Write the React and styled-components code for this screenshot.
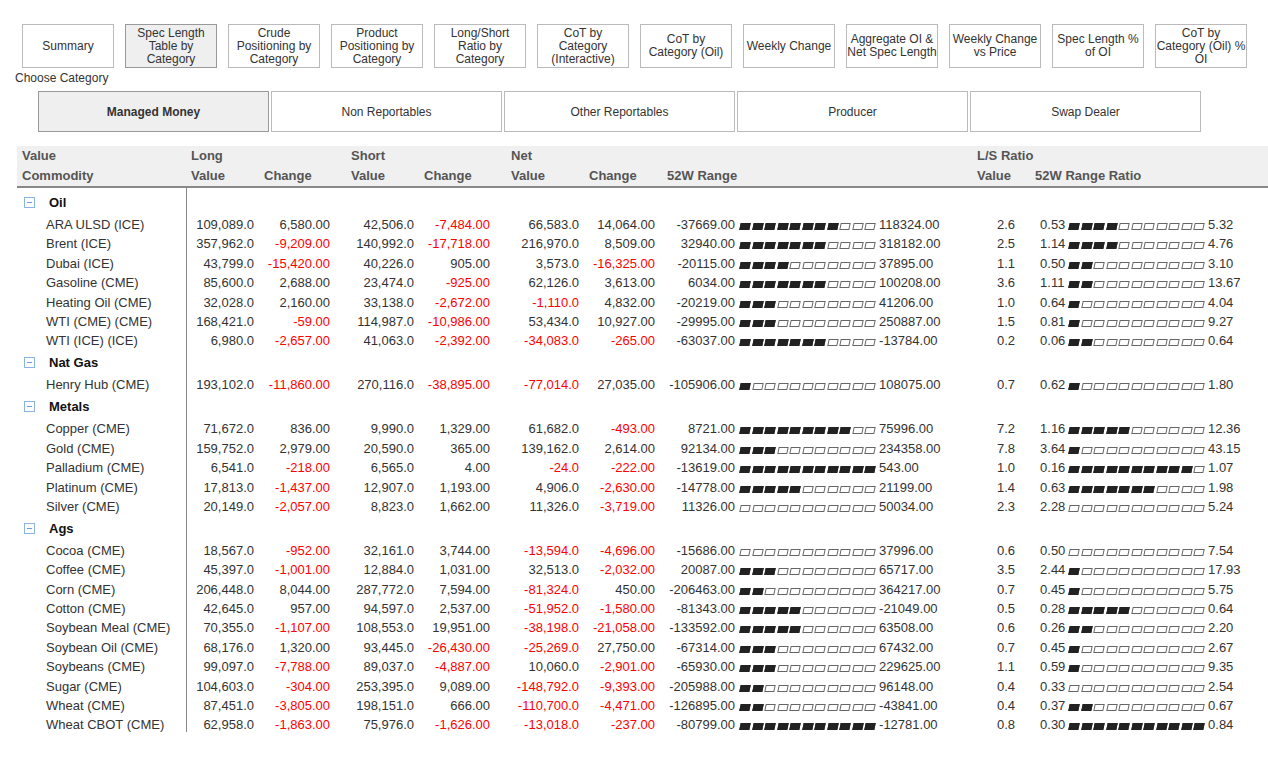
import React from "react";
import styled, { createGlobalStyle } from "styled-components";

const Global = createGlobalStyle`
  body { margin: 0; background: #fff; font-family: "Liberation Sans", Arial, sans-serif; color: #333; }
`;

const Page = styled.div`
  padding: 24px 0 0 0;
  width: 1268px;
`;

const Nav = styled.div`
  display: flex;
  gap: 11px;
  padding-left: 22px;
`;

const NavButton = styled.div`
  width: 90px;
  height: 42px;
  border: 1px solid ${(p) => (p.active ? "#999" : "#bbb")};
  background: ${(p) => (p.active ? "#efefef" : "#fff")};
  display: flex;
  align-items: center;
  justify-content: center;
  text-align: center;
  font-size: 12px;
  line-height: 13px;
  color: #333;
`;

const Label = styled.div`
  font-size: 12px;
  color: #333;
  margin: 3px 0 6px 15px;
`;

const Tabs = styled.div`
  display: flex;
  gap: 2px;
  padding-left: 38px;
`;

const Tab = styled.div`
  width: 229px;
  height: 39px;
  border: 1px solid ${(p) => (p.active ? "#999" : "#bbb")};
  background: ${(p) => (p.active ? "#efefef" : "#fff")};
  font-weight: ${(p) => (p.active ? "bold" : "normal")};
  display: flex;
  align-items: center;
  justify-content: center;
  font-size: 12px;
`;

const Table = styled.table`
  margin: 14px 0 0 17px;
  border-collapse: collapse;
  font-size: 13px;
  width: 1251px;
  table-layout: fixed;
`;

const Th = styled.th`
  background: #f0f0f0;
  text-align: left;
  font-weight: bold;
  color: #555;
  padding: 0 5px;
  height: ${(p) => (p.last ? "21px" : "19px")};
  border-bottom: ${(p) => (p.last ? "2px solid #888" : "none")};
  white-space: nowrap;
`;

const Td = styled.td`
  padding: 0 ${(p) => p.pr || 5}px 0 5px;
  height: ${(p) => (p.tall ? "22px" : "19.4px")};
  vertical-align: bottom;
  text-align: ${(p) => (p.left ? "left" : "right")};
  color: ${(p) => (p.neg ? "#f00" : "#333")};
  white-space: nowrap;
  border-right: ${(p) => (p.divider ? "1px solid #888" : "none")};
`;

const CatCell = styled.td`
  height: 22px;
  vertical-align: bottom;
  padding: 0 5px;
  font-weight: bold;
  color: #111;
  border-right: 1px solid #888;
  white-space: nowrap;
`;

const Toggle = styled.span`
  display: inline-block;
  width: 9px;
  height: 9px;
  border: 1px solid #8ab4e6;
  position: relative;
  margin: 0 14px 0 2px;
  vertical-align: -1px;
  &::after {
    content: "";
    position: absolute;
    left: 2px;
    right: 2px;
    top: 4px;
    height: 1px;
    background: #6a9ad8;
  }
`;

const Name = styled.span`
  padding-left: 24px;
`;

const Lo = styled.span`
  display: inline-block;
  width: ${(p) => p.w}px;
  text-align: right;
`;

const Bar = styled.span`
  display: inline-flex;
  gap: 2.5px;
  margin: 0 4px 0 5px;
  vertical-align: -1px;
`;

const Cell = styled.span`
  width: 10px;
  height: 7px;
  box-sizing: border-box;
  transform: skewX(-12deg);
  background: ${(p) => (p.on ? "#222" : "#fff")};
  border: 1px solid ${(p) => (p.on ? "#222" : "#666")};
`;

const Range = ({ lo, hi, n, w }) => (
  <>
    <Lo w={w}>{lo}</Lo>
    <Bar>
      {Array.from({ length: 11 }, (_, i) => (
        <Cell key={i} on={i < n} />
      ))}
    </Bar>
    {hi}
  </>
);

const data = [
  ["Oil", [
    ["ARA ULSD (ICE)", "109,089.0", "6,580.00", "42,506.0", "-7,484.00", "66,583.0", "14,064.00", "-37669.00", "118324.00", 8, "2.6", "0.53", "5.32", 4],
    ["Brent (ICE)", "357,962.0", "-9,209.00", "140,992.0", "-17,718.00", "216,970.0", "8,509.00", "32940.00", "318182.00", 7, "2.5", "1.14", "4.76", 4],
    ["Dubai (ICE)", "43,799.0", "-15,420.00", "40,226.0", "905.00", "3,573.0", "-16,325.00", "-20115.00", "37895.00", 4, "1.1", "0.50", "3.10", 2],
    ["Gasoline (CME)", "85,600.0", "2,688.00", "23,474.0", "-925.00", "62,126.0", "3,613.00", "6034.00", "100208.00", 7, "3.6", "1.11", "13.67", 2],
    ["Heating Oil (CME)", "32,028.0", "2,160.00", "33,138.0", "-2,672.00", "-1,110.0", "4,832.00", "-20219.00", "41206.00", 3, "1.0", "0.64", "4.04", 1],
    ["WTI (CME) (CME)", "168,421.0", "-59.00", "114,987.0", "-10,986.00", "53,434.0", "10,927.00", "-29995.00", "250887.00", 3, "1.5", "0.81", "9.27", 1],
    ["WTI (ICE) (ICE)", "6,980.0", "-2,657.00", "41,063.0", "-2,392.00", "-34,083.0", "-265.00", "-63037.00", "-13784.00", 7, "0.2", "0.06", "0.64", 2],
  ]],
  ["Nat Gas", [
    ["Henry Hub (CME)", "193,102.0", "-11,860.00", "270,116.0", "-38,895.00", "-77,014.0", "27,035.00", "-105906.00", "108075.00", 1, "0.7", "0.62", "1.80", 1],
  ]],
  ["Metals", [
    ["Copper (CME)", "71,672.0", "836.00", "9,990.0", "1,329.00", "61,682.0", "-493.00", "8721.00", "75996.00", 9, "7.2", "1.16", "12.36", 5],
    ["Gold (CME)", "159,752.0", "2,979.00", "20,590.0", "365.00", "139,162.0", "2,614.00", "92134.00", "234358.00", 3, "7.8", "3.64", "43.15", 1],
    ["Palladium (CME)", "6,541.0", "-218.00", "6,565.0", "4.00", "-24.0", "-222.00", "-13619.00", "543.00", 11, "1.0", "0.16", "1.07", 10],
    ["Platinum (CME)", "17,813.0", "-1,437.00", "12,907.0", "1,193.00", "4,906.0", "-2,630.00", "-14778.00", "21199.00", 5, "1.4", "0.63", "1.98", 7],
    ["Silver (CME)", "20,149.0", "-2,057.00", "8,823.0", "1,662.00", "11,326.0", "-3,719.00", "11326.00", "50034.00", 0, "2.3", "2.28", "5.24", 0],
  ]],
  ["Ags", [
    ["Cocoa (CME)", "18,567.0", "-952.00", "32,161.0", "3,744.00", "-13,594.0", "-4,696.00", "-15686.00", "37996.00", 0, "0.6", "0.50", "7.54", 0],
    ["Coffee (CME)", "45,397.0", "-1,001.00", "12,884.0", "1,031.00", "32,513.0", "-2,032.00", "20087.00", "65717.00", 3, "3.5", "2.44", "17.93", 1],
    ["Corn (CME)", "206,448.0", "8,044.00", "287,772.0", "7,594.00", "-81,324.0", "450.00", "-206463.00", "364217.00", 2, "0.7", "0.45", "5.75", 1],
    ["Cotton (CME)", "42,645.0", "957.00", "94,597.0", "2,537.00", "-51,952.0", "-1,580.00", "-81343.00", "-21049.00", 5, "0.5", "0.28", "0.64", 5],
    ["Soybean Meal (CME)", "70,355.0", "-1,107.00", "108,553.0", "19,951.00", "-38,198.0", "-21,058.00", "-133592.00", "63508.00", 5, "0.6", "0.26", "2.20", 2],
    ["Soybean Oil (CME)", "68,176.0", "1,320.00", "93,445.0", "-26,430.00", "-25,269.0", "27,750.00", "-67314.00", "67432.00", 3, "0.7", "0.45", "2.67", 1],
    ["Soybeans (CME)", "99,097.0", "-7,788.00", "89,037.0", "-4,887.00", "10,060.0", "-2,901.00", "-65930.00", "229625.00", 3, "1.1", "0.59", "9.35", 1],
    ["Sugar (CME)", "104,603.0", "-304.00", "253,395.0", "9,089.00", "-148,792.0", "-9,393.00", "-205988.00", "96148.00", 2, "0.4", "0.33", "2.54", 0],
    ["Wheat (CME)", "87,451.0", "-3,805.00", "198,151.0", "666.00", "-110,700.0", "-4,471.00", "-126895.00", "-43841.00", 2, "0.4", "0.37", "0.67", 2],
    ["Wheat CBOT (CME)", "62,958.0", "-1,863.00", "75,976.0", "-1,626.00", "-13,018.0", "-237.00", "-80799.00", "-12781.00", 11, "0.8", "0.30", "0.84", 11],
  ]],
];

const navItems = [
  "Summary", "Spec Length Table by Category", "Crude Positioning by Category", "Product Positioning by Category",
  "Long/Short Ratio by Category", "CoT by Category (Interactive)", "CoT by Category (Oil)", "Weekly Change",
  "Aggregate OI & Net Spec Length", "Weekly Change vs Price", "Spec Length % of OI", "CoT by Category (Oil) % OI",
];

const tabs = ["Managed Money", "Non Reportables", "Other Reportables", "Producer", "Swap Dealer"];
const neg = (s) => s.startsWith("-");
const widths = [169, 73, 87, 73, 87, 78, 78, 310, 58, 238];
const pads = [5, 16, 5, 16, 5, 7];

export default function App() {
  return (
    <Page>
      <Global />
      <Nav>
        {navItems.map((t, i) => (
          <NavButton key={t} active={i === 1}>{t}</NavButton>
        ))}
      </Nav>
      <Label>Choose Category</Label>
      <Tabs>
        {tabs.map((t, i) => (
          <Tab key={t} active={i === 0}>{t}</Tab>
        ))}
      </Tabs>
      <Table>
        <colgroup>
          {widths.map((w, i) => (
            <col key={i} style={{ width: w }} />
          ))}
        </colgroup>
        <thead>
          <tr>
            <Th>Value</Th>
            <Th colSpan={2}>Long</Th>
            <Th colSpan={2}>Short</Th>
            <Th colSpan={2}>Net</Th>
            <Th></Th>
            <Th colSpan={2}>L/S Ratio</Th>
          </tr>
          <tr>
            <Th last>Commodity</Th>
            <Th last>Value</Th>
            <Th last>Change</Th>
            <Th last>Value</Th>
            <Th last>Change</Th>
            <Th last>Value</Th>
            <Th last>Change</Th>
            <Th last>52W Range</Th>
            <Th last>Value</Th>
            <Th last>52W Range Ratio</Th>
          </tr>
        </thead>
        <tbody>
          {data.map(([cat, rows]) => (
            <React.Fragment key={cat}>
              <tr>
                <CatCell><Toggle />{cat}</CatCell>
                <td colSpan={9}></td>
              </tr>
              {rows.map((r, i) => (
                <tr key={r[0]}>
                  <Td left divider tall={i === 0}><Name>{r[0]}</Name></Td>
                  {r.slice(1, 7).map((v, j) => (
                    <Td key={j} pr={pads[j]} neg={neg(v)} tall={i === 0}>{v}</Td>
                  ))}
                  <Td left tall={i === 0}>
                    <Range lo={r[7]} hi={r[8]} n={r[9]} w={68} />
                  </Td>
                  <Td pr={15} tall={i === 0}>{r[10]}</Td>
                  <Td left tall={i === 0} style={{ paddingLeft: 10 }}>
                    <Range lo={r[11]} hi={r[12]} n={r[13]} w={24} />
                  </Td>
                </tr>
              ))}
            </React.Fragment>
          ))}
        </tbody>
      </Table>
    </Page>
  );
}
